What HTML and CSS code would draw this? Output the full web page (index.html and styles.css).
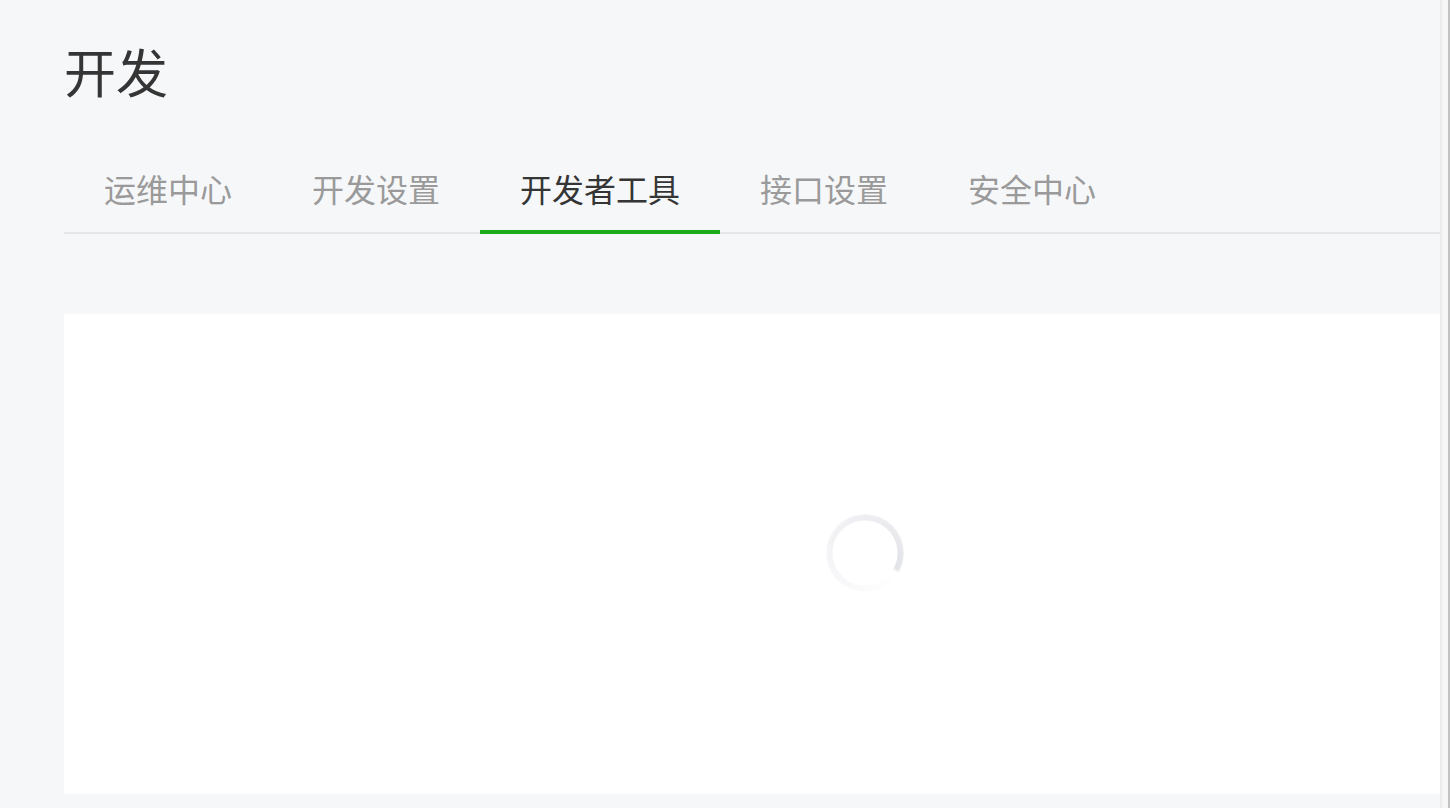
FILE: index.html
```html
<!DOCTYPE html>
<html lang="zh-CN">
<head>
<meta charset="utf-8">
<title>开发</title>
<link rel="stylesheet" href="styles.css">
</head>
<body>
<div class="page">
  <main class="main">
    <h1 class="title">开发</h1>
    <nav class="tabs">
      <a class="tab">运维中心</a>
      <a class="tab">开发设置</a>
      <a class="tab active">开发者工具</a>
      <a class="tab">接口设置</a>
      <a class="tab">安全中心</a>
    </nav>
    <section class="card">
      <div class="spinner"></div>
    </section>
  </main>
  <div class="scrollbar"><div class="thumb"></div></div>
</div>
</body>
</html>
```
FILE: styles.css
```css
html, body {
  margin: 0;
  padding: 0;
  height: 100%;
}
body {
  background: #f6f7f9;
  font-family: "Noto Sans CJK SC", "Noto Sans", sans-serif;
  overflow: hidden;
}
.page {
  display: flex;
  height: 808px;
}
.main {
  flex: 1;
  padding-left: 64px;
  display: flex;
  flex-direction: column;
}
.title {
  margin: 36px 0 0 0;
  font-size: 52px;
  line-height: 70px;
  height: 70px;
  font-weight: 400;
  color: #353535;
}
.tabs {
  margin-top: 44px;
  display: flex;
  border-bottom: 2px solid #e6e7ea;
}
.tab {
  position: relative;
  padding: 16px 40px 22px;
  font-size: 32px;
  line-height: 44px;
  color: #9a9a9a;
  white-space: nowrap;
}
.tab.active {
  color: #353535;
}
.tab.active::after {
  content: "";
  position: absolute;
  left: 0;
  right: 0;
  bottom: -2px;
  height: 4px;
  background: #1aad19;
}
.card {
  margin-top: 80px;
  height: 480px;
  background: #ffffff;
  display: flex;
  align-items: center;
  justify-content: center;
}
.spinner {
  width: 78px;
  height: 78px;
  margin-left: 226px;
  margin-top: -2px;
  border-radius: 50%;
  background: conic-gradient(from 128deg, rgba(230,231,236,0) 0deg, rgba(230,231,236,0.4) 120deg, #eeeef2 240deg, #e2e3e8 350deg, rgba(255,255,255,0) 352deg);
  -webkit-mask: radial-gradient(circle, transparent 32px, #000 33px);
  mask: radial-gradient(circle, transparent 32px, #000 33px);
  filter: blur(0.8px);
}
.scrollbar {
  width: 8px;
  border-left: 2px solid #ebebeb;
  background: #f6f6f6;
  position: relative;
}
.thumb {
  position: absolute;
  right: 0;
  top: 0;
  bottom: 0;
  width: 2px;
  background: #c2c2c2;
}
```
